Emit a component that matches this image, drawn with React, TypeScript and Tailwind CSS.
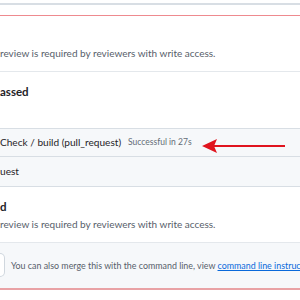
export default function App() {
  const font = { fontFamily: 'Lato, "Noto Sans", Arial, sans-serif' };
  return (
    <div className="relative w-[300px] h-[300px] bg-white overflow-hidden flex flex-col" style={font}>
      <div className="h-[3px]" />
      <div className="h-[2px] bg-[#d8dee4]" />
      <div className="h-[10px]" />
      <div className="h-[1px] bg-[#ee8a8f]" />
      <div className="h-[29px]" />
      <div className="h-[16px] flex items-center text-[10px] text-[#57606a] whitespace-nowrap">
        review is required by reviewers with write access.
      </div>
      <div className="h-[10px]" />
      <div className="h-[1px] bg-[#e4e8ec]" />
      <div className="h-[12px]" />
      <div className="h-[16px] flex items-center text-[11.5px] font-bold text-[#1f2328] whitespace-nowrap">
        assed
      </div>
      <div className="h-[28px]" />
      <div className="bg-[#f6f8fa] border-y border-[#d8dee4] flex flex-col">
        <div className="h-[28px] flex items-center whitespace-nowrap border-b border-[#d8dee4]">
          <span className="text-[10.1px] text-[#1f2328]">Check / build (pull_request)</span>
          <span className="ml-[7px] text-[8.5px] text-[#636c76]">Successful in 27s</span>
        </div>
        <div className="h-[29px] flex items-center text-[10.1px] text-[#1f2328] whitespace-nowrap">
          uest
        </div>
      </div>
      <svg width="84" height="16" viewBox="0 0 84 16" className="absolute left-[202px] top-[138px]">
        <line x1="12" y1="8" x2="83" y2="8" stroke="#e0141e" strokeWidth="2.2" />
        <polygon points="0,8 15,1 12,8 15,15" fill="#e0141e" />
      </svg>
      <div className="h-[12px]" />
      <div className="h-[16px] flex items-center text-[11.5px] font-bold text-[#1f2328] whitespace-nowrap">
        d
      </div>
      <div className="h-[1px]" />
      <div className="h-[16px] flex items-center text-[10px] text-[#57606a] whitespace-nowrap">
        review is required by reviewers with write access.
      </div>
      <div className="h-[10px]" />
      <div className="h-[46px] bg-[#f6f8fa] border-t border-[#e4e8ec] flex items-center whitespace-nowrap overflow-hidden">
        <div className="shrink-0 w-[5px] h-[24px] border border-l-0 border-[#d0d7de] rounded-r-[5px] bg-white -mt-[1px]" />
        <span className="ml-[6px] text-[8.9px] text-[#57606a]">
          You can also merge this with the command line, view{" "}
          <a className="text-[#0969da] underline">command line instructions.</a>
        </span>
      </div>
      <div className="h-[2px] bg-[#e9a2a5]" />
      <div className="flex-1 bg-white" />
    </div>
  );
}
